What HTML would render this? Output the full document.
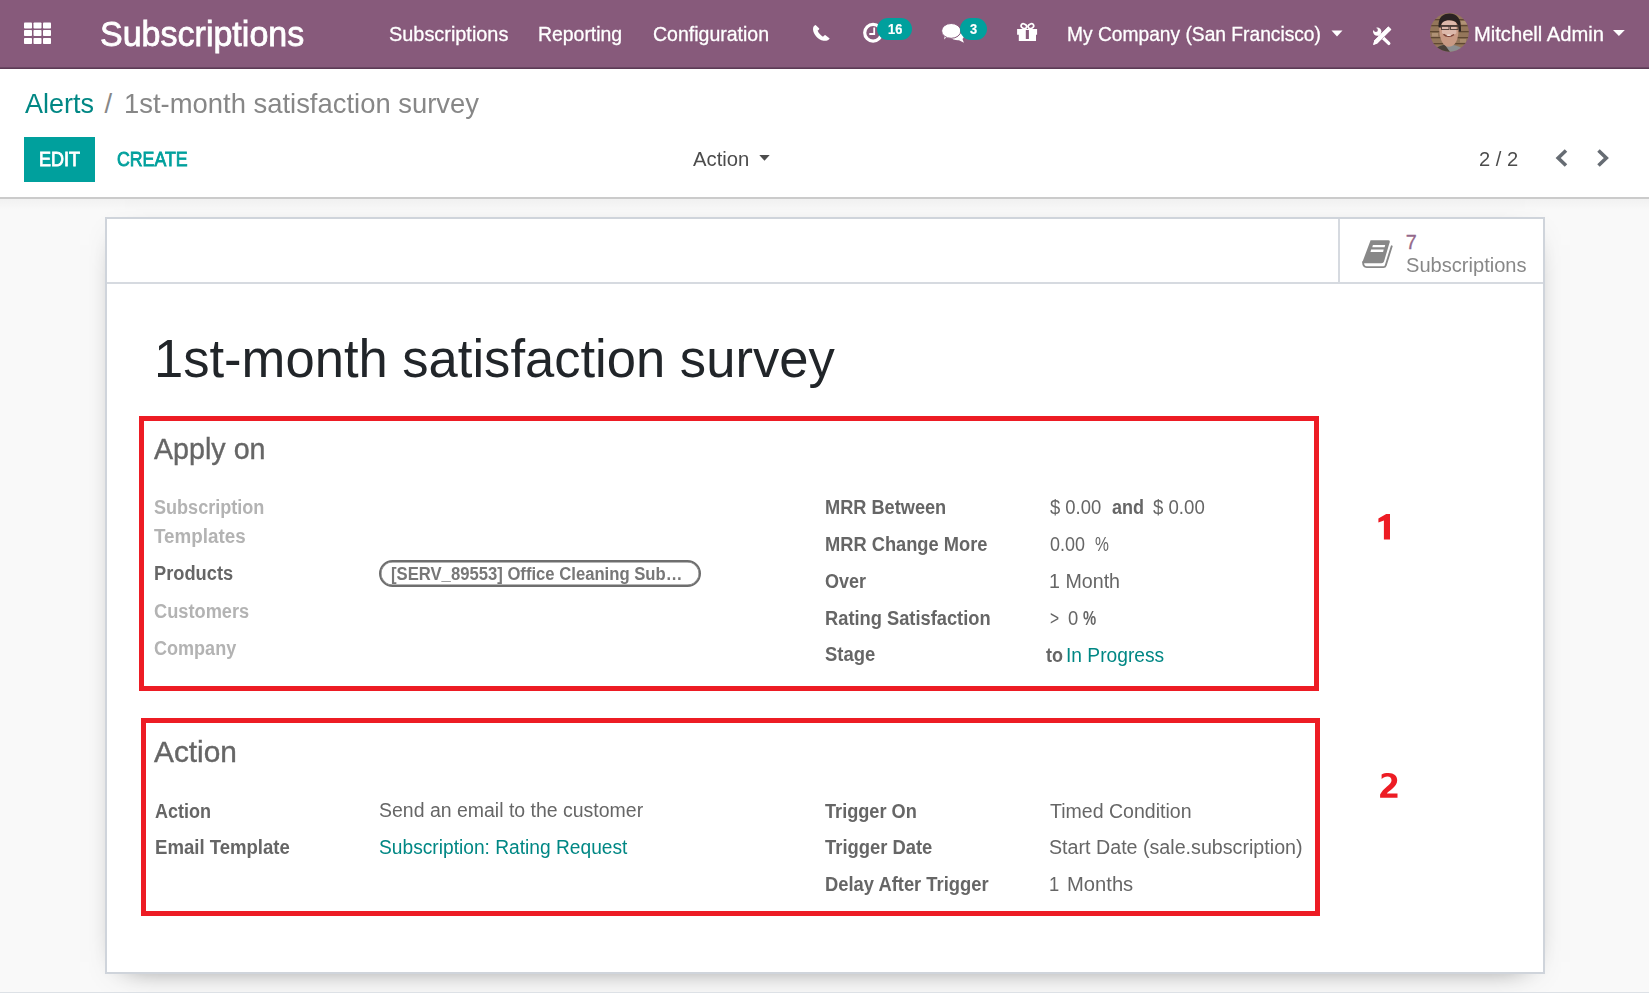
<!DOCTYPE html>
<html><head><meta charset="utf-8"><title>Alerts - Odoo</title>
<style>
html,body{margin:0;padding:0;}
body{width:1649px;height:993px;overflow:hidden;position:relative;background:#f9f9f9;font-family:"Liberation Sans",sans-serif;}
.t{position:absolute;white-space:pre;line-height:1;transform-origin:0 0;}
.abs{position:absolute;}
</style></head><body>
<!-- navbar -->
<div class="abs" style="left:0;top:0;width:1649px;height:67px;background:#875A7B;"></div>
<div class="abs" style="left:0;top:67px;width:1649px;height:1px;background:#6a4763;"></div><div class="abs" style="left:0;top:68px;width:1649px;height:1px;background:#5d3a55;"></div>
<!-- control panel -->
<div class="abs" style="left:0;top:69px;width:1649px;height:128px;background:#fff;"></div>
<div class="abs" style="left:0;top:197px;width:1649px;height:2px;background:#cbcbcb;"></div>
<div class="abs" style="left:0;top:199px;width:1649px;height:12px;background:linear-gradient(rgba(0,0,0,0.03),rgba(0,0,0,0));"></div>
<div class="abs" style="left:24px;top:137px;width:71px;height:45px;background:#00A09D;"></div>
<!-- sheet -->
<div class="abs" style="left:105px;top:217px;width:1436px;height:753px;background:#fff;border:2px solid #cfd4db;box-shadow:0 8px 30px -20px rgba(0,0,0,0.75);"></div>
<div class="abs" style="left:107px;top:282px;width:1436px;height:2px;background:#d6dae0;"></div>
<div class="abs" style="left:1338px;top:219px;width:2px;height:63px;background:#d6dae0;"></div>
<div class="abs" style="left:0;top:992px;width:1649px;height:1px;background:#dde1e6;"></div>
<!-- red boxes -->
<div class="abs" style="left:139px;top:416px;width:1170px;height:265px;border:5px solid #ed1c24;"></div>
<div class="abs" style="left:141px;top:718px;width:1169px;height:188px;border:5px solid #ed1c24;"></div>
<!-- tag -->
<div class="abs" style="left:379px;top:560px;width:318px;height:23px;border:2px solid #6e6e6e;border-radius:14px;box-shadow:inset 0 0 0 0.5px #6e6e6e;"></div>

<!-- grid icon -->
<svg class="abs" style="left:0;top:0" width="60" height="60">
<g fill="#fff">
<rect x="24" y="22.5" width="8" height="6" rx="0.8"/><rect x="33.5" y="22.5" width="8" height="6" rx="0.8"/><rect x="43" y="22.5" width="8" height="6" rx="0.8"/>
<rect x="24" y="30" width="8" height="6" rx="0.8"/><rect x="33.5" y="30" width="8" height="6" rx="0.8"/><rect x="43" y="30" width="8" height="6" rx="0.8"/>
<rect x="24" y="38" width="8" height="6" rx="0.8"/><rect x="33.5" y="38" width="8" height="6" rx="0.8"/><rect x="43" y="38" width="8" height="6" rx="0.8"/>
</g></svg>
<!-- phone -->
<svg class="abs" style="left:808px;top:18px" width="30" height="28">
<path fill="#fff" d="M7.6,7 C6.2,7.3 5,8.6 5,11.2 C5.3,16.2 9.8,21.6 15.6,22.8 C18.4,23.1 20.6,22.4 21.7,20.6 L17.2,16.9 C16.3,17.1 15.6,17.9 15,18.7 C12.6,17.5 10.6,15.2 9.6,12.6 C10.6,12.1 11.3,11.4 11.3,10.4 Z"/>
</svg>
<!-- clock -->
<svg class="abs" style="left:858px;top:14px" width="30" height="32">
<circle cx="15.1" cy="18.8" r="8.4" fill="none" stroke="#fff" stroke-width="3.2"/>
<path d="M16.2,13.4 V20 H11.3" fill="none" stroke="#fff" stroke-width="1.8"/>
</svg>
<div class="abs" style="left:877px;top:18px;width:35px;height:22px;border-radius:11px;background:#00A09D;"></div>
<!-- comments -->
<svg class="abs" style="left:938px;top:16px" width="30" height="30">
<path fill="#fff" d="M12,21 C14,23.5 18,24.5 21,24.2 L25.9,26.8 L24.5,23 C25.5,22 26,21 26,19.5 C26,18 25,16.5 23.5,15.5 C23,18.5 18,21.5 12,21 Z"/>
<path fill="#fff" d="M6.1,23.6 L9.2,20.4 L7,18.8 Z"/>
<ellipse cx="13.2" cy="14.9" rx="9.6" ry="7.4" fill="#fff" stroke="#875A7B" stroke-width="1"/>
</svg>
<div class="abs" style="left:960px;top:18px;width:27px;height:22px;border-radius:11px;background:#00A09D;"></div>
<!-- gift -->
<svg class="abs" style="left:1012px;top:18px" width="30" height="28">
<path fill="#fff" fill-rule="evenodd" d="M5.1,11 H25.1 V16.8 H24 V23 H6.8 V16.8 H5.1 Z M13.8,12 V21 H16.9 V12 Z"/>
<ellipse cx="11.9" cy="8.2" rx="2.9" ry="2.2" transform="rotate(25 11.9 8.2)" fill="none" stroke="#fff" stroke-width="1.7"/>
<ellipse cx="18.9" cy="8.2" rx="2.9" ry="2.2" transform="rotate(-25 18.9 8.2)" fill="none" stroke="#fff" stroke-width="1.7"/>
<path d="M13.5,10 L15.4,11.2 L17.3,10 L15.4,12 Z" fill="#fff"/>
</svg>
<!-- company caret -->
<svg class="abs" style="left:1320px;top:20px" width="30" height="30"><path d="M11.5,10.5 H22.5 L17,16.5 Z" fill="#fff"/></svg>
<!-- tools -->
<svg class="abs" style="left:1366px;top:20px" width="32" height="30">
<path d="M12.5,13.5 L22.8,23.4" stroke="#fff" stroke-width="3.3" stroke-linecap="round"/>
<circle cx="11.2" cy="11.6" r="4.2" fill="#fff"/>
<circle cx="9.9" cy="10.1" r="2.0" fill="#875A7B"/>
<path d="M9.9,10.1 L10.6,6.2 L6.2,6.2 L6.4,10.6 Z" fill="#875A7B"/>
<path d="M7.2,24.9 L8.3,20.6 L22.4,6.6 L25.3,9.5 L11.2,23.6 Z" fill="#fff" stroke="#875A7B" stroke-width="1" paint-order="stroke"/>
<path d="M7.2,24.9 L8.3,20.6 L22.4,6.6 L25.3,9.5 L11.2,23.6 Z" fill="#fff"/>
</svg>
<!-- avatar -->
<svg class="abs" style="left:1430px;top:13px" width="39" height="39">
<defs><clipPath id="av"><circle cx="19.4" cy="19.4" r="19.4"/></clipPath>
<filter id="bl" x="-10%" y="-10%" width="120%" height="120%"><feGaussianBlur stdDeviation="0.7"/></filter></defs>
<g clip-path="url(#av)">
<rect width="39" height="39" fill="#94765a"/>
<g filter="url(#bl)">
<rect x="0" y="6" width="39" height="1.3" fill="#5e4632"/>
<rect x="0" y="12" width="39" height="1.3" fill="#5e4632"/>
<rect x="0" y="18" width="39" height="1.3" fill="#5e4632"/>
<rect x="0" y="24" width="39" height="1.3" fill="#5e4632"/>
<rect x="0" y="30" width="39" height="1.3" fill="#5e4632"/>
<rect x="31" y="8" width="6" height="3.5" fill="#b09274"/>
<rect x="2" y="20" width="6" height="3.5" fill="#b09274"/>
<rect x="30" y="26" width="6" height="3.5" fill="#a88a6c"/>
<path d="M4,39 C7,33 12,31 18,31.5 C25,32 31,33 35,39 Z" fill="#8c8e90"/>
<path d="M4,39 C6,34 10,32 15,32 L20,39 Z" fill="#4a4038"/>
<path d="M9.2,15 C9.2,8 13,6 19,6 C25,6 28.6,9 28.6,16 C28.6,25 26,33.5 19,33.8 C12.5,33.8 9.2,25 9.2,15 Z" fill="#c99a84"/>
<path d="M12,9 C15,7 22,7 26,9.5 L26.5,20 C24,23 15,23 12,20 Z" fill="#dcb8aa"/>
<path d="M8.5,14 C8,4 13,0.5 19.5,0.5 C27,0.5 31.5,5 31,18.5 L28.8,18.5 C28.8,11 26,7.2 19.5,7.2 C14,7.2 11,9 10.5,15 Z" fill="#2b2220"/>
<rect x="10" y="12.2" width="20" height="1.6" fill="#3b302c"/>
<rect x="11.5" y="12.5" width="7.5" height="4" fill="none" stroke="#4a3c36" stroke-width="0.9"/>
<rect x="20.5" y="12.5" width="7.5" height="4" fill="none" stroke="#4a3c36" stroke-width="0.9"/>
<path d="M13.5,21.2 C16,23.8 21,24 24,21.5" stroke="#7a4236" stroke-width="1.4" fill="none"/>
<ellipse cx="18.8" cy="22.3" rx="2.3" ry="0.7" fill="#efe4de"/>
</g>
</g></svg>
<!-- user caret -->
<svg class="abs" style="left:1605px;top:20px" width="30" height="30"><path d="M8,10 H19.8 L13.9,16 Z" fill="#fff"/></svg>
<!-- action caret -->
<svg class="abs" style="left:750px;top:145px" width="30" height="30"><path d="M9.3,10 H19.7 L14.5,15.7 Z" fill="#4c4c4c"/></svg>
<!-- pager chevrons -->
<svg class="abs" style="left:1545px;top:140px" width="80" height="40">
<path d="M21,10.5 L13.2,18 L21,25.5" fill="none" stroke="#666c73" stroke-width="3.6"/>
<path d="M53.5,10.5 L61.3,18 L53.5,25.5" fill="none" stroke="#666c73" stroke-width="3.6"/>
</svg>
<!-- book -->
<svg class="abs" style="left:1355px;top:232px" width="45" height="43">
<path d="M15.6,8.2 L33.3,8.2 Q35.2,8.2 34.7,10.2 L29,29.4 Q28.4,31.2 26.4,31.2 L8.6,31.2 Q7.2,31.2 7.5,29.8 Z" fill="#888"/>
<path d="M17.9,13 L30.2,13 L29.6,15.2 L17.3,15.2 Z M16.1,17.5 L28.7,17.5 L28.1,20 L15.5,20 Z" fill="#fff"/>
<path d="M8.2,30 Q7.8,35 11.8,35.1 L28.5,35.1 Q30.2,35.1 30.7,33.5 L36.7,14.3" fill="none" stroke="#888" stroke-width="1.9" stroke-linecap="round"/>
</svg>

<svg class="abs" style="left:1370px;top:505px" width="30" height="40"><path d="M16.2,9 L20,9 L20,34.5 L13.9,34.5 L13.9,15.6 L8.4,17.6 L8.4,13.4 Z" fill="#ed1c24"/></svg>
<svg class="abs" style="left:1360px;top:760px" width="45" height="45"><path d="M21.6,14.6 C23.5,13.4 25.5,13 28.5,13 C34,13 37.2,16 37.2,20.3 C37.2,24 35,26.5 32,29 C30,30.7 28,32 26.8,33.4 L37.5,33.4 L37.5,37.7 L20.1,37.7 L20.1,34.6 C21.5,31.5 24,29 27,26.5 C29.5,24.3 31.5,22.8 31.5,20.5 C31.5,18 30,16.6 27.5,16.6 C25.2,16.6 23.2,17.6 21.6,19.1 Z" fill="#ed1c24"/></svg>
<div class="t" style="left:100.23px;top:16.35px;font-size:35.00px;font-weight:400;color:#ffffff;transform:scaleX(0.9721);-webkit-text-stroke:0.8px #ffffff">Subscriptions</div>
<div class="t" style="left:388.51px;top:23.53px;font-size:20.20px;font-weight:400;color:#ffffff;transform:scaleX(0.9850);-webkit-text-stroke:0.3px #ffffff">Subscriptions</div>
<div class="t" style="left:538.34px;top:23.53px;font-size:20.20px;font-weight:400;color:#ffffff;transform:scaleX(0.9616);-webkit-text-stroke:0.3px #ffffff">Reporting</div>
<div class="t" style="left:653.00px;top:23.53px;font-size:20.20px;font-weight:400;color:#ffffff;transform:scaleX(0.9667);-webkit-text-stroke:0.3px #ffffff">Configuration</div>
<div class="t" style="left:1066.75px;top:23.53px;font-size:20.20px;font-weight:400;color:#ffffff;transform:scaleX(0.9511);-webkit-text-stroke:0.3px #ffffff">My Company (San Francisco)</div>
<div class="t" style="left:1473.50px;top:24.03px;font-size:20.20px;font-weight:400;color:#ffffff;transform:scaleX(0.9984);-webkit-text-stroke:0.3px #ffffff">Mitchell Admin</div>
<div class="t" style="left:888.40px;top:22.57px;font-size:13.80px;font-weight:700;color:#ffffff;transform:scaleX(0.9300);-webkit-text-stroke:0.2px #ffffff">16</div>
<div class="t" style="left:969.90px;top:22.57px;font-size:13.80px;font-weight:700;color:#ffffff;transform:scaleX(0.9300);-webkit-text-stroke:0.2px #ffffff">3</div>
<div class="t" style="left:24.80px;top:89.81px;font-size:27.40px;font-weight:400;color:#008784;transform:scaleX(0.9857)">Alerts</div>
<div class="t" style="left:104.60px;top:89.81px;font-size:27.40px;font-weight:400;color:#878787;transform:scaleX(1.0000)">/</div>
<div class="t" style="left:124.20px;top:89.81px;font-size:27.40px;font-weight:400;color:#878787;transform:scaleX(1.0008)">1st-month satisfaction survey</div>
<div class="t" style="left:38.89px;top:149.57px;font-size:19.80px;font-weight:400;color:#ffffff;transform:scaleX(0.9091);-webkit-text-stroke:0.8px #ffffff">EDIT</div>
<div class="t" style="left:116.70px;top:149.57px;font-size:19.80px;font-weight:400;color:#00A09D;transform:scaleX(0.8962);-webkit-text-stroke:0.8px #00A09D">CREATE</div>
<div class="t" style="left:693.00px;top:148.80px;font-size:20.00px;font-weight:400;color:#4c4c4c;transform:scaleX(1.0127)">Action</div>
<div class="t" style="left:1479.00px;top:148.83px;font-size:20.20px;font-weight:400;color:#4c4c4c;transform:scaleX(0.9974)">2 / 2</div>
<div class="t" style="left:1405.70px;top:232.97px;font-size:19.80px;font-weight:400;color:#94688a;transform:scaleX(1.0000);-webkit-text-stroke:0.3px #94688a">7</div>
<div class="t" style="left:1406.02px;top:255.19px;font-size:20.60px;font-weight:400;color:#888888;transform:scaleX(0.9754)">Subscriptions</div>
<div class="t" style="left:154.11px;top:330.60px;font-size:54.00px;font-weight:400;color:#212529;transform:scaleX(0.9734)">1st-month satisfaction survey</div>
<div class="t" style="left:154.20px;top:434.03px;font-size:30.20px;font-weight:400;color:#666666;transform:scaleX(0.9496);-webkit-text-stroke:0.4px #666666">Apply on</div>
<div class="t" style="left:154.40px;top:496.60px;font-size:20.00px;font-weight:700;color:#b3b3b3;transform:scaleX(0.9033)">Subscription</div>
<div class="t" style="left:154.40px;top:525.90px;font-size:20.00px;font-weight:700;color:#b3b3b3;transform:scaleX(0.9402)">Templates</div>
<div class="t" style="left:154.40px;top:562.70px;font-size:20.00px;font-weight:700;color:#666666;transform:scaleX(0.9128)">Products</div>
<div class="t" style="left:154.40px;top:600.70px;font-size:20.00px;font-weight:700;color:#b3b3b3;transform:scaleX(0.9115)">Customers</div>
<div class="t" style="left:154.40px;top:637.90px;font-size:20.00px;font-weight:700;color:#b3b3b3;transform:scaleX(0.9022)">Company</div>
<div class="t" style="left:390.60px;top:564.60px;font-size:18.00px;font-weight:700;color:#777777;transform:scaleX(0.9256)">[SERV_89553] Office Cleaning Sub…</div>
<div class="t" style="left:825.00px;top:496.90px;font-size:20.00px;font-weight:700;color:#666666;transform:scaleX(0.9090)">MRR Between</div>
<div class="t" style="left:825.00px;top:533.70px;font-size:20.00px;font-weight:700;color:#666666;transform:scaleX(0.9135)">MRR Change More</div>
<div class="t" style="left:825.00px;top:570.90px;font-size:20.00px;font-weight:700;color:#666666;transform:scaleX(0.9000)">Over</div>
<div class="t" style="left:825.00px;top:608.10px;font-size:20.00px;font-weight:700;color:#666666;transform:scaleX(0.9144)">Rating Satisfaction</div>
<div class="t" style="left:825.00px;top:644.40px;font-size:20.00px;font-weight:700;color:#666666;transform:scaleX(0.9222)">Stage</div>
<div class="t" style="left:1050.00px;top:496.60px;font-size:20.00px;font-weight:400;color:#666666;transform:scaleX(0.9214)">$ 0.00</div>
<div class="t" style="left:1112.20px;top:496.60px;font-size:20.00px;font-weight:700;color:#666666;transform:scaleX(0.9000)">and</div>
<div class="t" style="left:1153.30px;top:496.60px;font-size:20.00px;font-weight:400;color:#666666;transform:scaleX(0.9304)">$ 0.00</div>
<div class="t" style="left:1050.00px;top:533.70px;font-size:20.00px;font-weight:400;color:#666666;transform:scaleX(0.8974)">0.00</div>
<div class="t" style="left:1095.30px;top:533.70px;font-size:20.00px;font-weight:400;color:#666666;transform:scaleX(0.7800)">%</div>
<div class="t" style="left:1049.02px;top:570.90px;font-size:20.00px;font-weight:400;color:#666666;transform:scaleX(0.9831)">1 Month</div>
<div class="t" style="left:1050.00px;top:608.10px;font-size:20.00px;font-weight:400;color:#666666;transform:scaleX(0.7800)">&gt;</div>
<div class="t" style="left:1068.00px;top:608.10px;font-size:20.00px;font-weight:400;color:#666666;transform:scaleX(0.9200)">0</div>
<div class="t" style="left:1082.60px;top:608.10px;font-size:20.00px;font-weight:700;color:#666666;transform:scaleX(0.7400)">%</div>
<div class="t" style="left:1046.30px;top:645.00px;font-size:20.00px;font-weight:700;color:#666666;transform:scaleX(0.9000)">to</div>
<div class="t" style="left:1066.24px;top:645.00px;font-size:20.00px;font-weight:400;color:#008784;transform:scaleX(0.9604)">In Progress</div>
<div class="t" style="left:154.20px;top:737.13px;font-size:30.20px;font-weight:400;color:#666666;transform:scaleX(0.9880);-webkit-text-stroke:0.4px #666666">Action</div>
<div class="t" style="left:154.50px;top:800.80px;font-size:20.00px;font-weight:700;color:#666666;transform:scaleX(0.9000)">Action</div>
<div class="t" style="left:154.50px;top:837.00px;font-size:20.00px;font-weight:700;color:#666666;transform:scaleX(0.9283)">Email Template</div>
<div class="t" style="left:378.73px;top:800.00px;font-size:20.00px;font-weight:400;color:#666666;transform:scaleX(0.9737)">Send an email to the customer</div>
<div class="t" style="left:378.74px;top:837.00px;font-size:20.00px;font-weight:400;color:#008784;transform:scaleX(0.9591)">Subscription: Rating Request</div>
<div class="t" style="left:825.00px;top:800.90px;font-size:20.00px;font-weight:700;color:#666666;transform:scaleX(0.9069)">Trigger On</div>
<div class="t" style="left:825.00px;top:837.30px;font-size:20.00px;font-weight:700;color:#666666;transform:scaleX(0.9197)">Trigger Date</div>
<div class="t" style="left:825.00px;top:873.70px;font-size:20.00px;font-weight:700;color:#666666;transform:scaleX(0.9179)">Delay After Trigger</div>
<div class="t" style="left:1050.00px;top:800.90px;font-size:20.00px;font-weight:400;color:#666666;transform:scaleX(0.9766)">Timed Condition</div>
<div class="t" style="left:1049.02px;top:837.30px;font-size:20.00px;font-weight:400;color:#666666;transform:scaleX(0.9832)">Start Date (sale.subscription)</div>
<div class="t" style="left:1049.08px;top:873.70px;font-size:20.00px;font-weight:400;color:#666666;transform:scaleX(0.9200)">1</div>
<div class="t" style="left:1067.19px;top:873.70px;font-size:20.00px;font-weight:400;color:#666666;transform:scaleX(1.0094)">Months</div>
</body></html>
